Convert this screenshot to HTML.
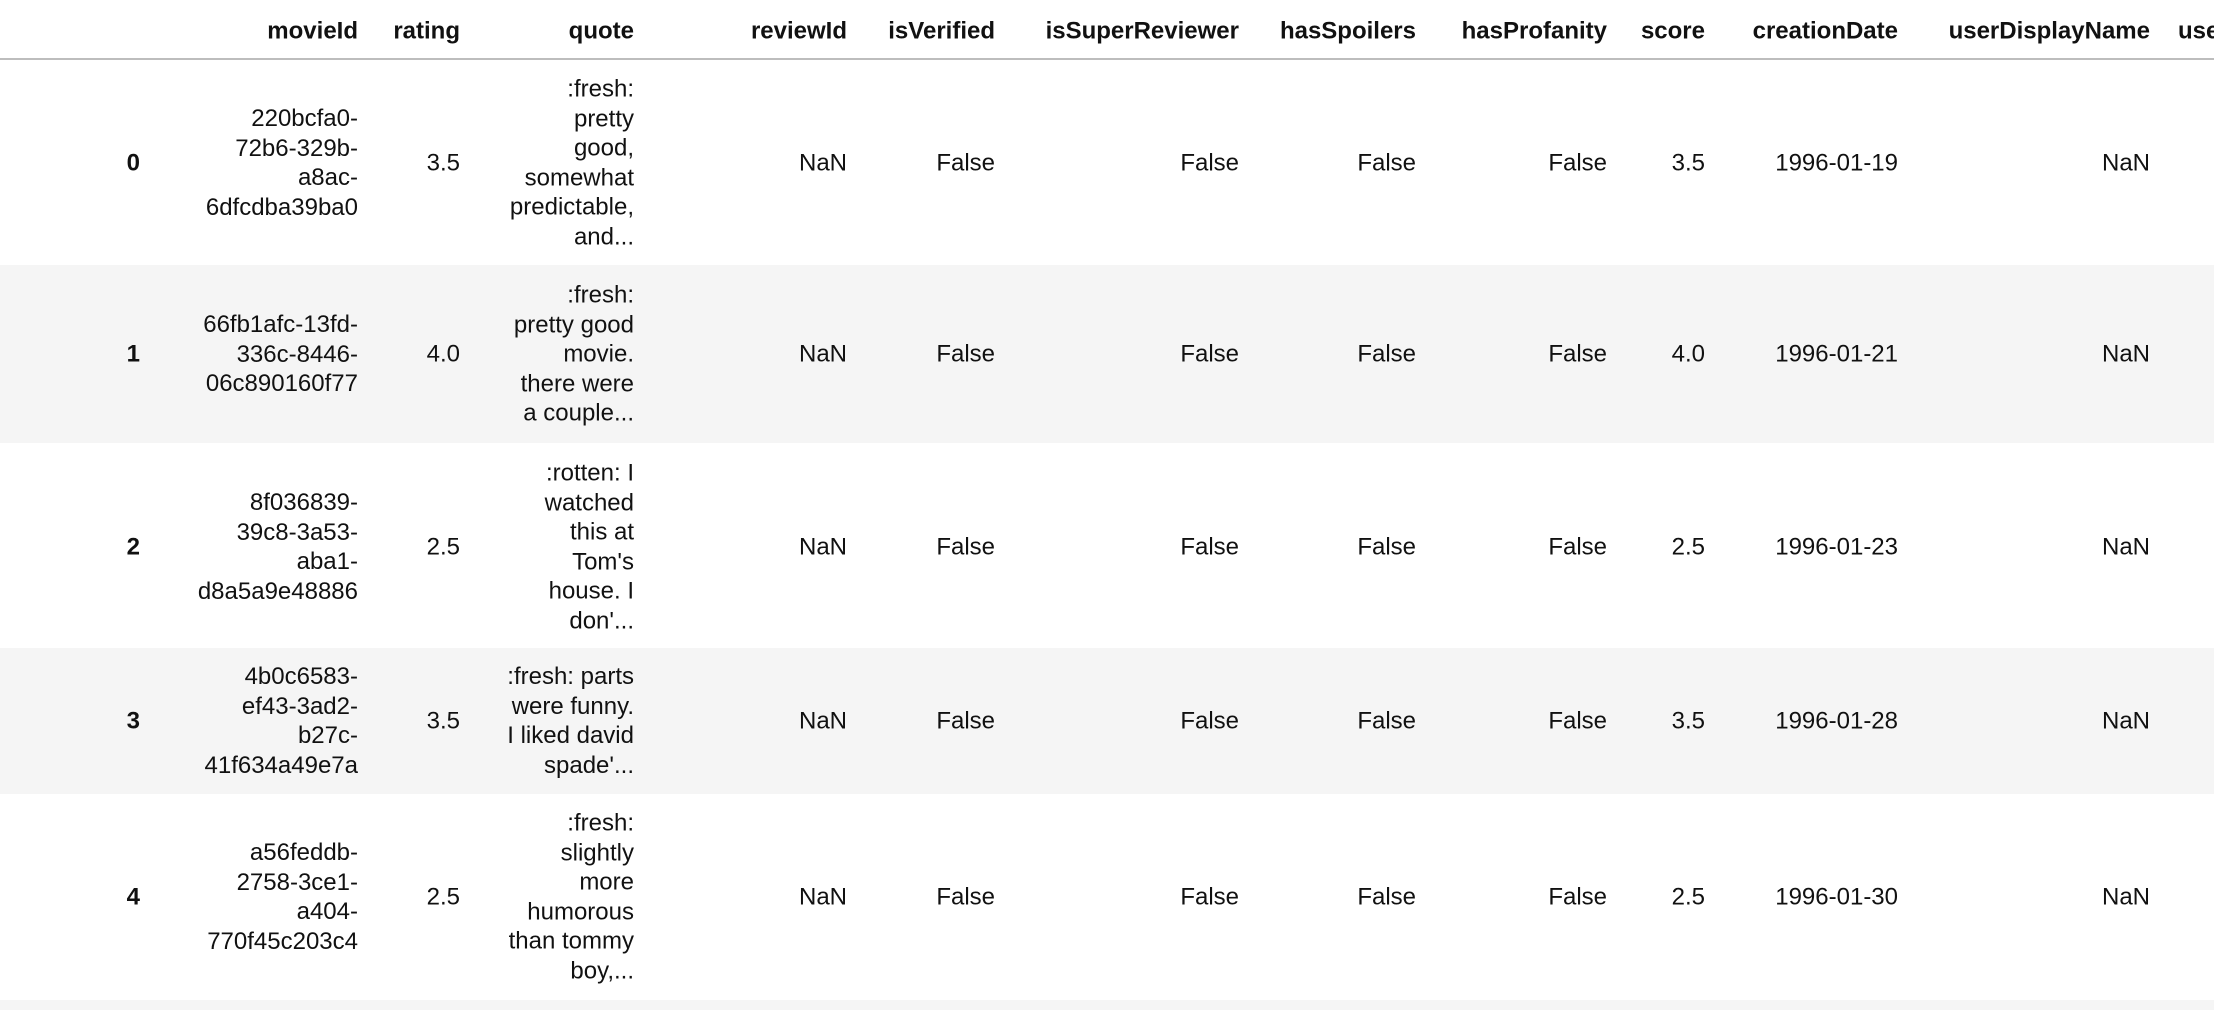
<!DOCTYPE html>
<html><head><meta charset="utf-8"><style>
html,body{margin:0;padding:0;background:#fff;width:2214px;height:1010px;overflow:hidden;position:relative;font-family:"Liberation Sans",Arial,sans-serif;color:#111;}
.c{position:absolute;text-align:right;font-size:24px;line-height:29.5px;white-space:nowrap;transform:translateY(-50%);}
.h{font-weight:bold;}
.bg{position:absolute;left:0;width:2214px;background:#f5f5f5;}
.line{position:absolute;left:0;top:58px;width:2214px;height:2px;background:#bdbdbd;}
</style></head><body>
<div class="bg" style="top:265px;height:178px"></div>
<div class="bg" style="top:648px;height:146px"></div>
<div class="bg" style="top:1000px;height:10px"></div>
<div class="line"></div>
<div id="t"></div>
<script>
var R=[140,358,460,634,847,995,1239,1416,1607,1705,1898,2150,2250];
var H=["","movieId","rating","quote","reviewId","isVerified","isSuperReviewer","hasSpoilers","hasProfanity","score","creationDate","userDisplayName","userId"];
var rows=[
[163,"0","220bcfa0-<br>72b6-329b-<br>a8ac-<br>6dfcdba39ba0","3.5",":fresh:<br>pretty<br>good,<br>somewhat<br>predictable,<br>and...","3.5","1996-01-19"],
[354,"1","66fb1afc-13fd-<br>336c-8446-<br>06c890160f77","4.0",":fresh:<br>pretty good<br>movie.<br>there were<br>a couple...","4.0","1996-01-21"],
[547,"2","8f036839-<br>39c8-3a53-<br>aba1-<br>d8a5a9e48886","2.5",":rotten: I<br>watched<br>this at<br>Tom's<br>house. I<br>don'...","2.5","1996-01-23"],
[721,"3","4b0c6583-<br>ef43-3ad2-<br>b27c-<br>41f634a49e7a","3.5",":fresh: parts<br>were funny.<br>I liked david<br>spade'...","3.5","1996-01-28"],
[897,"4","a56feddb-<br>2758-3ce1-<br>a404-<br>770f45c203c4","2.5",":fresh:<br>slightly<br>more<br>humorous<br>than tommy<br>boy,...","2.5","1996-01-30"]];
var s="";
function cell(r,y,txt,b){s+='<div class="c'+(b?' h':'')+'" style="right:'+(2214-R[r])+'px;top:'+y+'px">'+txt+'</div>';}
for(var i=1;i<H.length;i++)cell(i,31,H[i],1);
rows.forEach(function(w){var y=w[0];
cell(0,y,w[1],1);cell(1,y,w[2]);cell(2,y,w[3]);cell(3,y,w[4]);
cell(4,y,"NaN");cell(5,y,"False");cell(6,y,"False");cell(7,y,"False");cell(8,y,"False");
cell(9,y,w[5]);cell(10,y,w[6]);cell(11,y,"NaN");});
document.getElementById("t").innerHTML=s;
</script>
</body></html>
